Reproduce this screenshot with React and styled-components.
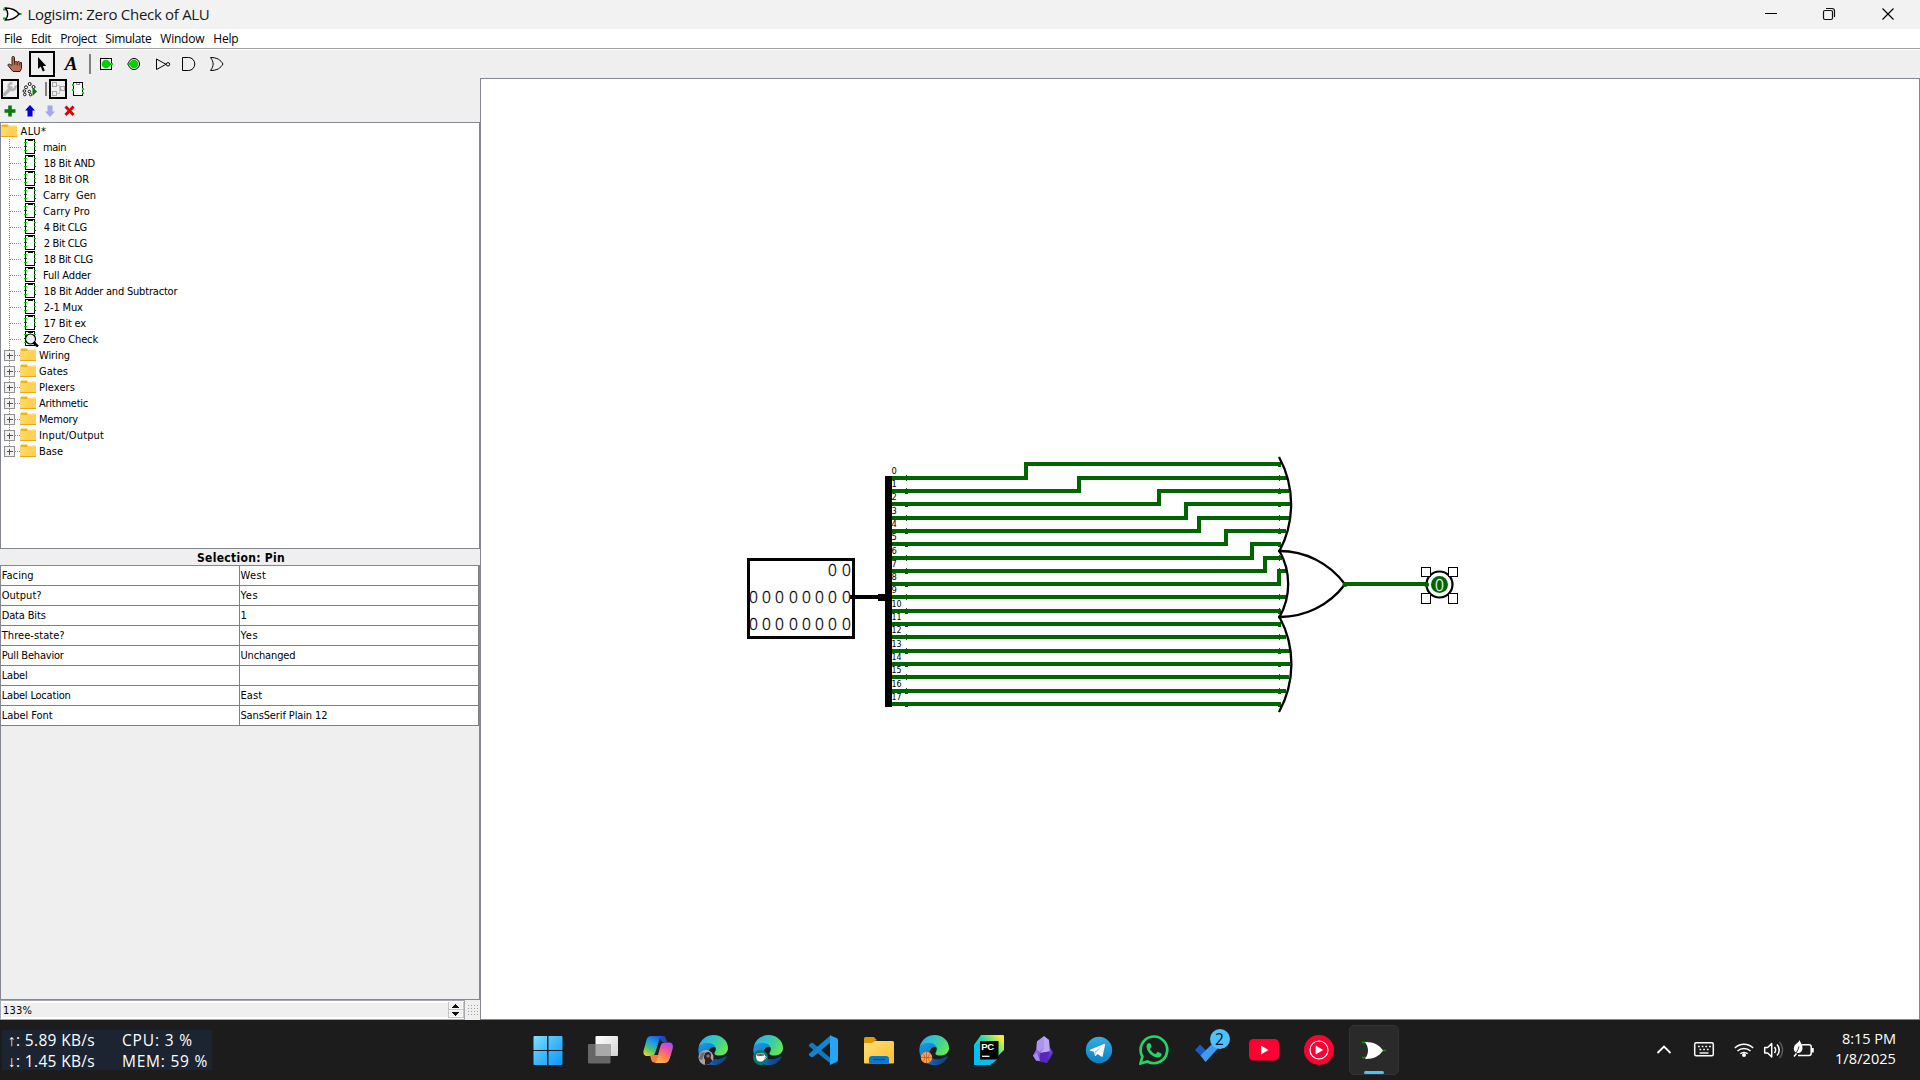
import React, { useLayoutEffect, useRef, useState } from "react";
import styled, { createGlobalStyle, css } from "styled-components";

const TAHOMA = '"DejaVu Sans Condensed", "DejaVu Sans", sans-serif';
const SEGOE = '"Open Sans", "Noto Sans", sans-serif';
const WIRE = "#006400";
const EDGE = "#828790";

const Global = createGlobalStyle`
  * { box-sizing: border-box; }
  body { margin: 0; background: #efefef; overflow: hidden; }
  svg { display: block; flex: none; }
`;

const Screen = styled.div`
  width: 1920px;
  height: 1080px;
  display: flex;
  flex-direction: column;
  background: #efefef;
  color: #000;
  font: 11px ${TAHOMA};
`;

/* ---------- text run fitted to a given advance width ---------- */
const Run = styled.span`
  white-space: pre;
  display: inline-block;
  flex: none;
`;
function Fit({ w, children }) {
  const ref = useRef(null);
  const [spacing, setSpacing] = useState(0);
  useLayoutEffect(() => {
    const natural = ref.current.getBoundingClientRect().width;
    setSpacing((w - natural) / children.length);
  }, [w, children]);
  return <Run ref={ref} style={{ letterSpacing: spacing }}>{children}</Run>;
}

/* ---------- title and menu ---------- */
const TitleBar = styled.header`
  height: 29px;
  flex: none;
  display: flex;
  align-items: flex-start;
  background: #f2f2f2;
  padding-left: 3px;
  font: 15px/28px ${SEGOE};
  color: #191919;
`;
const TitleText = styled.div`
  margin-left: 5.5px;
  flex: 1;
`;
const WindowButton = styled.div`
  width: ${(p) => p.$w || 58}px;
  height: 29px;
  display: flex;
  justify-content: center;
`;
const WindowButtons = styled.div`
  display: flex;
  padding-right: 2px;
`;
const MenuBar = styled.nav`
  height: 21px;
  flex: none;
  display: flex;
  gap: 9px;
  padding-left: 4px;
  background: linear-gradient(#fff 0 19px, #a0a0a0 19px 20px, #fff 20px);
  font: 12px/19px ${SEGOE};
`;

/* ---------- toolbars ---------- */
const ToolRow = styled.div`
  height: ${(p) => p.$h}px;
  flex: none;
  display: flex;
  align-items: flex-start;
  padding-left: ${(p) => p.$pad}px;
`;
const Tool = styled.div`
  flex: none;
  width: ${(p) => p.$w}px;
  height: ${(p) => p.$h}px;
  margin: ${(p) => p.$m || "0"};
  ${(p) => p.$active && css`box-shadow: inset 0 0 0 2px #000;`}
`;
const Divider = styled.div`
  width: 2px;
  height: ${(p) => p.$h}px;
  margin: ${(p) => p.$m};
  background: #808080;
`;
const LetterTool = styled(Tool)`
  font: italic bold 19px/28px "Liberation Serif", serif;
  text-align: center;
`;

/* ---------- main area ---------- */
const Main = styled.div`
  flex: none;
  height: 942px;
  display: flex;
`;
const Side = styled.aside`
  width: 480px;
  display: flex;
  flex-direction: column;
`;
const Canvas = styled.section`
  flex: 1;
  border: 1px solid ${EDGE};
  background: #fff;
`;
const Tree = styled.div`
  height: 427px;
  flex: none;
  border: 1px solid ${EDGE};
  background: #fff;
`;
const TreeRow = styled.div`
  height: 16px;
  display: flex;
  align-items: flex-start;
  line-height: 18px;
`;
const TreeLabel = styled.div`
  margin-left: ${(p) => p.$gap}px;
`;
const Heading = styled.div`
  height: 16px;
  flex: none;
  padding-left: 2px;
  text-align: center;
  font: bold 12px/18px ${TAHOMA};
`;
const Properties = styled.div`
  flex: 1;
  border: 1px solid ${EDGE};
`;
const PropRow = styled.div`
  height: 20px;
  width: 478px;
  display: grid;
  grid-template-columns: 239px 239px;
  grid-template-rows: 20px;
  line-height: 20px;
`;
const Cell = styled.div`
  background: #fff;
  border-right: 1px solid #808080;
  border-bottom: 1px solid #808080;
  padding-left: ${(p) => (p.$value ? 0.4 : 0.7)}px;
`;
const ZoomRow = styled.div`
  height: 20px;
  flex: none;
  display: flex;
`;
const Spinner = styled.div`
  width: 465px;
  display: flex;
  border: 1px solid #a5a9b0;
  background: #efefef;
  box-shadow: inset 0 0 0 2px #fff;
  padding-left: 2px;
  line-height: 20px;
`;
const SpinnerValue = styled.div`
  flex: 1;
`;

/* ---------- taskbar ---------- */
const Taskbar = styled.footer`
  height: 60px;
  flex: none;
  display: flex;
  background: #1c1c1c;
  color: #fff;
  font: 15.5px/21px ${SEGOE};
`;
const Meter = styled.div`
  width: 210px;
  height: 40px;
  margin: 10px 308.4px 0 2px;
  padding: 0 0 0 6px;
  background: #1b2430;
  display: grid;
  grid-template-columns: 114px 1fr;
  grid-auto-rows: 21px;
  justify-items: start;
  line-height: 20px;
`;
const Apps = styled.div`
  display: flex;
  align-items: center;
`;
const AppSlot = styled.div`
  position: relative;
  width: 55.1px;
  height: 50px;
  display: flex;
  align-items: center;
  justify-content: center;
`;
const ActiveTile = styled.div`
  width: 50px;
  height: 50px;
  border-radius: 5px;
  border: 1px solid #333;
  background: #2a2a2a;
  display: flex;
  flex-direction: column;
  align-items: center;
  justify-content: flex-end;
`;
const ActiveMark = styled.div`
  width: 20px;
  height: 4px;
  border-radius: 2px;
  background: #4cc2ff;
`;
const Badge = styled.div`
  position: absolute;
  left: 28px;
  top: 4px;
  width: 20px;
  height: 20px;
  border-radius: 50%;
  background: #4cc2ff;
  color: #111;
  font: 15.5px/20px ${SEGOE};
  text-align: center;
`;
const Tray = styled.div`
  margin-left: auto;
  display: flex;
`;
const Clock = styled.div`
  width: 71px;
  margin-right: 24px;
  padding-top: 9px;
  display: flex;
  flex-direction: column;
  align-items: flex-end;
  font: 14.5px/20px ${SEGOE};
`;

/* Icon whose drawing uses the window's pixel grid: (x, y) is its corner. */
function Glyph({ x, y, w, h, children, smooth }) {
  return (
    <svg width={w} height={h} viewBox={`${x} ${y} ${w} ${h}`} fill="none" shapeRendering={smooth ? "auto" : "crispEdges"}>
      {children}
    </svg>
  );
}

function MainToolbar() {
  return (
    <ToolRow $h={28} $pad={1}>
      <Tool $w={28} $h={28}>
        <Glyph x={1} y={50} w={28} h={28} smooth>
          <path d="M12 57.500c0-1.500 2.300-1.500 2.500 0v5l1-1 2 .5 1.500-.5 1 1 1.500 0v6l-1.500 3h-7l-5-6c-.5-1 1-2 2.300-1l1.700 1z" fill="#b87055" stroke="#3c1a10" />
          <path d="M14.700 62v3M17.200 62.500v3M19.700 63v2.500" stroke="#3c1a10" strokeWidth=".8" />
        </Glyph>
      </Tool>
      <Tool $w={26} $h={26} $active $m="1px 2px 0 0">
        <Glyph x={29} y={51} w={26} h={26} smooth>
          <path d="M38 57v12l2.700-2.500 2.100 5 2-1-2-4.500h3.500z" fill="#000" />
        </Glyph>
      </Tool>
      <LetterTool $w={28} $h={28}>A</LetterTool>
      <Divider $h={20} $m="4px 1px 0 4px" />
      <Tool $w={28} $h={28}>
        <Glyph x={92} y={50} w={28} h={28} smooth>
          <rect x="100.500" y="58.500" width="11" height="11" stroke="#000" />
          <circle cx="106" cy="64" r="4.300" fill="#00d200" />
          <path d="M109 64h4" stroke="#00d200" strokeWidth="2" />
        </Glyph>
      </Tool>
      <Tool $w={28} $h={28}>
        <Glyph x={120} y={50} w={28} h={28} smooth>
          <circle cx="134" cy="64" r="5.500" stroke="#000" />
          <circle cx="134" cy="64" r="4.200" fill="#00d200" />
          <path d="M127 64h4" stroke="#00d200" strokeWidth="2" />
        </Glyph>
      </Tool>
      <Tool $w={28} $h={28}>
        <Glyph x={148} y={50} w={28} h={28} smooth>
          <path d="M156.500 59v10.500L166 64.300z" stroke="#000" />
          <circle cx="168" cy="64.300" r="1.700" stroke="#000" />
        </Glyph>
      </Tool>
      <Tool $w={28} $h={28}>
        <Glyph x={176} y={50} w={28} h={28} smooth>
          <path d="M182.500 57.500h6a6.300 6.500 0 0 1 0 13h-6z" stroke="#000" />
        </Glyph>
      </Tool>
      <Tool $w={28} $h={28}>
        <Glyph x={204} y={50} w={28} h={28} smooth>
          <path d="M210.500 57.500c7 0 10 2.500 12.500 6.500-2.500 4-5.500 6.500-12.500 6.500 3.500-4.500 3.500-8.500 0-13z" stroke="#000" />
        </Glyph>
      </Tool>
    </ToolRow>
  );
}

function ExplorerToolbar() {
  return (
    <ToolRow $h={22} $pad={1}>
      <Tool $w={18} $h={20} $active $m="1px 3px 0 0">
        <Glyph x={1} y={79} w={18} h={20} smooth>
          <path d="M4.500 94.500 11 88" stroke="#b4b4b4" strokeWidth="3.600" strokeLinecap="round" />
          <path d="M15.500 85.500a3.500 3.500 0 1 1-3-2.500" stroke="#b4b4b4" strokeWidth="2.600" />
        </Glyph>
      </Tool>
      <Tool $w={18} $h={20} $m="1px 5px 0 0">
        <Glyph x={22} y={79} w={18} h={20} smooth>
          <g fill="#fff" stroke="#000" strokeWidth=".9">
            <circle cx="29.700" cy="84" r="1.500" /><circle cx="26" cy="87.300" r="1.500" /><circle cx="33.500" cy="87" r="1.500" />
            <circle cx="24.300" cy="91" r="1.300" /><circle cx="24.800" cy="94.500" r="1.300" /><circle cx="29.300" cy="91.500" r="1.300" /><circle cx="30.500" cy="94.700" r="1.200" />
          </g>
          <path d="m32.500 87 4.500 4.500-4.500 4.500z" fill="#0a7a0a" />
        </Glyph>
      </Tool>
      <Divider $h={14} $m="4px 2px 0 0" />
      <Tool $w={18} $h={20} $active $m="1px 4px 0 0">
        <Glyph x={49} y={79} w={18} h={20}>
          <path d="M57 85.500h2.500v5M57 93.500h2.500v-4h2" stroke="#a8dca8" />
          <path d="M52.500 82.500h4v4h-4zM52.500 91.500h4v4h-4zM60.500 86.500h4v4h-4z" stroke="#a8a8a8" />
        </Glyph>
      </Tool>
      <Tool $w={14} $h={20} $m="1px 0 0 0">
        <Glyph x={71} y={79} w={14} h={20}>
          <path d="M73.500 82.500h9v13h-9z" fill="#fff" stroke="#000" />
          <path d="M76.500 83v1.500h3V83" stroke="#999" />
          <path d="M72 85h2M72 90h2M82 89h2M82 93h2" stroke="#00d200" strokeWidth="2" />
        </Glyph>
      </Tool>
    </ToolRow>
  );
}

function EditToolbar() {
  return (
    <ToolRow $h={22} $pad={0}>
      <Glyph x={0} y={100} w={20} h={22} smooth>
        <path d="M10 105.500v11M4.500 111h11" stroke="#0a7a0a" strokeWidth="3.600" />
      </Glyph>
      <Glyph x={20} y={100} w={20} h={22} smooth>
        <path d="m30 105 5 5.500h-2.500v6h-5v-6H25z" fill="#0000dc" />
      </Glyph>
      <Glyph x={40} y={100} w={20} h={22} smooth>
        <path d="m50 117-5-5.500h2.500v-6h5v6H55z" fill="#a6a6ec" />
      </Glyph>
      <Glyph x={60} y={100} w={20} h={22} smooth>
        <path d="m65.500 106.500 8 8.500m0-8.500-8 8.500" stroke="#e00000" strokeWidth="2.900" />
      </Glyph>
    </ToolRow>
  );
}

/* ---------- explorer tree ---------- */
const circuits = [
  ["main", 23], ["18 Bit AND", 51], ["18 Bit OR", 45], ["Carry  Gen", 53], ["Carry Pro", 47], ["4 Bit CLG", 43],
  ["2 Bit CLG", 43], ["18 Bit CLG", 49], ["Full Adder", 48], ["18 Bit Adder and Subtractor", 133.5], ["2-1 Mux", 39],
  ["17 Bit ex", 42], ["Zero Check", 55],
];
const libraries = [
  ["Wiring", 31], ["Gates", 29], ["Plexers", 36], ["Arithmetic", 49], ["Memory", 39], ["Input/Output", 65], ["Base", 24],
];

function Folder() {
  return (
    <svg width="16" height="16" viewBox="0 0 16 16">
      <path d="M1 1.500h6l1 2v4H.5v-5z" fill="#f4b014" />
      <path d="M0 4h7l1.500-1.500H16V14H0z" fill="#ffd868" />
      <path d="M8 4h8v9H4z" fill="#ffcf4c" opacity=".7" />
      <path d="M0 13h16v1H0z" fill="#e5a823" />
    </svg>
  );
}
function CircuitIcon({ current }) {
  return (
    <svg width="42" height="16" viewBox="1 0 42 16" fill="none" shapeRendering="crispEdges">
      <path d="M9.500 0v16" stroke="#8a8a8a" strokeDasharray="1 1" />
      <path d="M10 8.500h11" stroke="#8a8a8a" strokeDasharray="1 1" />
      <path d="M25.500.5h9v14h-9zM28 .5v1h4v-1" stroke="#000" />
      <path d="M24 3.500h3M24 11.500h3M34 7.500h2M34 3.500h2" stroke="#00d200" />
      <path d="M24 7.500h3M34 11.500h2" stroke="#005a00" />
      {current && (
        <g shapeRendering="auto">
          <circle cx="30.500" cy="8" r="5" fill="#eeeeff" stroke="#000" strokeWidth="1.200" />
          <path d="m33.500 11.500 4.500 4" stroke="#000" strokeWidth="2.500" />
        </g>
      )}
    </svg>
  );
}
function Expander({ last }) {
  return (
    <svg width="19" height="16" viewBox="1 0 19 16" fill="none" shapeRendering="crispEdges">
      <path d={last ? "M9.500 0v8" : "M9.500 0v16"} stroke="#8a8a8a" strokeDasharray="1 1" />
      <path d="M15 8.500h5" stroke="#8a8a8a" strokeDasharray="1 1" />
      <rect x="4.500" y="3.500" width="10" height="10" fill="#f1f1f1" stroke="#919191" />
      <path d="M7 8.500h6M9.500 6v6" stroke="#3a509c" />
    </svg>
  );
}
function Explorer() {
  return (
    <Tree>
      <TreeRow>
        <Folder />
        <TreeLabel $gap={3.5}><Fit w={26}>ALU*</Fit></TreeLabel>
      </TreeRow>
      {circuits.map(([name, w]) => (
        <TreeRow key={name}>
          <CircuitIcon current={name === "Zero Check"} />
          <TreeLabel $gap={/^\d/.test(name) ? 0.8 : 0}><Fit w={w}>{name}</Fit></TreeLabel>
        </TreeRow>
      ))}
      {libraries.map(([name, w]) => (
        <TreeRow key={name}>
          <Expander last={name === "Base"} />
          <Folder />
          <TreeLabel $gap={3}><Fit w={w}>{name}</Fit></TreeLabel>
        </TreeRow>
      ))}
    </Tree>
  );
}

const properties = [
  ["Facing", 32, "West", 26], ["Output?", 40, "Yes", 18], ["Data Bits", 44, "1", 7], ["Three-state?", 63, "Yes", 18],
  ["Pull Behavior", 62, "Unchanged", 55], ["Label", 26, "", 0], ["Label Location", 69, "East", 22],
  ["Label Font", 51, "SansSerif Plain 12", 87],
];

/* ---------- circuit drawing ---------- */
const rows = [464, 478, 491, 504, 518, 531, 544, 558, 571, 584, 597, 611, 624, 637, 651, 664, 677, 691, 704];
const jogs = [1026, 1079, 1159, 1186, 1199, 1226, 1252, 1265, 1279];
const ends = [1281, 1287, 1289, 1290, 1289, 1286, 1281, 1282, 1286, 0, 1287, 1281, 1281, 1286, 1290, 1290, 1289, 1286, 1281];
const digitCols = [753, 766, 779, 793, 806, 819, 832, 846];

function bump(x, i, y) {
  const m = (i + 2) % 3;
  return (
    <g key={`${x}-${y}`} fill={WIRE}>
      {m !== 2 && <rect x={x} y={y - 3} width="1" height="6" />}
      {m !== 0 && <rect x={x - 1} y={y} width="3" height="3" />}
    </g>
  );
}

function Circuit() {
  return (
    <svg width="1438" height="939" viewBox="481 79 1438 939" fill="none" shapeRendering="crispEdges">
      <g stroke={WIRE} strokeWidth="4">
        {rows.slice(1).map((y, i) =>
          i < 9 ? (
            <path key={y} d={`M892 ${y}H${jogs[i]}V${rows[i]}H${ends[i]}`} />
          ) : (
            <path key={y} d={`M892 ${y}H${ends[i + 1]}`} />
          )
        )}
        <path d="M1344 584h83" />
      </g>
      {rows.slice(1).map((y, i) => bump(906, i + 1, y))}
      {rows.filter((y) => y !== 584).map((y, i) => bump(1279, i < 9 ? i : i + 1, y))}
      <rect x="885" y="476" width="7" height="231" fill="#000" />
      <path d="M850 597h30" stroke="#000" strokeWidth="4" />
      <rect x="878" y="594" width="8" height="7" fill="#000" />
      <rect x="748.500" y="559.500" width="105" height="78" stroke="#000" strokeWidth="3" />
      <g fill="#000" fontFamily={TAHOMA} fontSize="9.300">
        {rows.slice(1).map((y, i) => (
          <text key={y} x="891.600" y={y - 3.8} textLength={i > 9 ? 10 : undefined} lengthAdjust="spacingAndGlyphs">{i}</text>
        ))}
      </g>
      <g fill="#000" stroke="#000" strokeWidth=".35" fontFamily={SEGOE} fontWeight="300" fontSize="15.500" textAnchor="middle">
        {[576, 603, 630].map((y, r) =>
          digitCols.filter((_, c) => r > 0 || c > 5).map((x) => (
            <text key={`${x}-${y}`} x={x + 0.5} y={y}>0</text>
          ))
        )}
      </g>
      <g stroke="#000" strokeWidth="2.300" shapeRendering="auto">
        <path d="M1279 457A99 99 0 0 1 1279.500 551A67 67 0 0 1 1279.500 617A99 99 0 0 1 1279 712" />
        <path d="M1278 551A81 81 0 0 1 1345 584.300A81 81 0 0 1 1278 617" />
        <circle cx="1345" cy="584.500" r="2.500" fill={WIRE} stroke="none" />
        <circle cx="1439.500" cy="584.500" r="13" strokeWidth="2.200" />
        <circle cx="1439.500" cy="584.500" r="8.500" fill={WIRE} stroke="none" />
        <circle cx="1426.500" cy="584.500" r="2.500" fill={WIRE} stroke="none" />
      </g>
      <text x="1439.500" y="590.500" fill="#fff" stroke="#fff" strokeWidth=".3" fontFamily={SEGOE} fontWeight="300" fontSize="15.500" textAnchor="middle">0</text>
      <g fill="#fff" stroke="#000">
        {[[1421, 567], [1448, 567], [1421, 593], [1448, 593]].map(([x, y]) => (
          <rect key={`${x}${y}`} x={x + 0.5} y={y + 0.5} width="9" height={y === 567 ? 9 : 10} />
        ))}
      </g>
    </svg>
  );
}

/* ---------- taskbar drawings ---------- */
function Gradients() {
  const g = (id, stops, dir = [0, 0, 1, 1]) => (
    <linearGradient id={id} x1={dir[0]} y1={dir[1]} x2={dir[2]} y2={dir[3]}>
      {stops.map((c, i) => <stop key={i} offset={i / (stops.length - 1)} stopColor={c} />)}
    </linearGradient>
  );
  return (
    <svg width="0" height="0">
      <defs>
        {g("win", ["#7ee0ff", "#3fb8fb", "#0a96ff"])}
        {g("edgeTop", ["#2fa9ea", "#2dc3d5", "#46d38a", "#6bea4e"], [0, 0.2, 1, 0.7])}
        {g("edgeMid", ["#1ca0e8", "#0c62b8"], [0, 0, 0.6, 1])}
        {g("edgeLow", ["#1470c8", "#123e80"], [0, 0, 1, 0.6])}
        {g("copA", ["#1a5fe0", "#1c9de8", "#4cc36f", "#e8d62a"], [0.7, 0, 0.2, 1])}
        {g("copB", ["#a44ff0", "#f0569f", "#ff8a4a", "#ffc24a"], [0.7, 0, 0.2, 1])}
        {g("folder", ["#ffe07a", "#ffbd2a"], [0, 0, 1, 1])}
        {g("pc", ["#00c8f0", "#17d5b5", "#f5f02a"], [0.1, 0.8, 0.9, 0.1])}
        {g("obs", ["#c4aaff", "#8a5be8", "#4d23b0"], [0.2, 0, 0.7, 1])}
        {g("tg", ["#35ade0", "#0d7fc4"], [0, 0, 0, 1])}
        {g("task", ["#fff", "#d4d4d4"])}
      </defs>
    </svg>
  );
}
const Svg30 = ({ children }) => <svg width="30" height="30" viewBox="0 0 30 30" fill="none">{children}</svg>;

/* Browser swirl: upper wave, left body, dark lower crescent. */
function Edge({ children }) {
  return (
    <Svg30>
      <path d="M.3 14C2 8.500 7 7.500 11 7.500c4 0 7 2 7.500 5-5-2-8.500 2-8 7 .5 5 5 8.500 9.500 9.500-2 .8-4 1-5 1C6 30 0 23 .3 14z" fill="url(#edgeMid)" />
      <path d="M.5 13C2 4 9 0 15.500 0 24 0 30 6 30 13c0 5-4 7.500-9 7.500-4 0-5.500-1.500-4-3.500 2.500-4-.5-9-7-9C5 8 2 10 .5 13z" fill="url(#edgeTop)" />
      <path d="M10.500 17c-1 7 7 10 17 4.500 1-.5 1.500 0 1 1C26 27 22 29.500 18.500 30 12 29 8 22 10.500 17z" fill="url(#edgeLow)" />
      {children}
    </Svg30>
  );
}

function TaskbarApps() {
  return (
    <Apps>
      <AppSlot>
        <Svg30><path d="M.5 2q0-1 1-1H14v14H.500zM15.500 1H28.500q1 0 1 1v13h-14zM.5 16H14v14H1.500q-1 0-1-1zM15.500 16h14v13q0 1-1 1h-13z" fill="url(#win)" /></Svg30>
      </AppSlot>
      <AppSlot>
        <Svg30>
          <rect x="7.500" y="1" width="22.500" height="20" rx="1" fill="url(#task)" />
          <rect x="0" y="9" width="22.500" height="19.500" rx="1" fill="#666" />
          <path d="M7.500 9h15v12h-15z" fill="#a9a9a9" />
        </Svg30>
      </AppSlot>
      <AppSlot>
        <Svg30>
          <path d="M15 1h5c2 0 2.500 1.500 3 3l1 3h-5z" fill="#1c48d0" />
          <path d="M8 1h11c-1 0-2 1-2.500 3l-4 13c-.8 2.500-2 4-4.500 4H4C1 21 0 18.500.6 15.500L3.500 5C4.300 2 6 1 8 1z" fill="url(#copA)" />
          <path d="M7 20h8l-1 7.500h-3c-2 0-2.500-1.500-3-3.500z" fill="#ff7a3c" />
          <path d="M22 7.500h4.500c3 0 4 3 3.200 6l-3 10c-.8 3-2.700 4.500-5.200 4.500H11c1.500 0 2-1 2.500-2.500l4-14.500c.7-2.500 2-3.500 4.500-3.500z" fill="url(#copB)" />
        </Svg30>
      </AppSlot>
      <AppSlot>
        <Edge>
          <circle cx="8" cy="22.500" r="7.500" fill="#a9a3a8" />
          <path d="M7 30v-5l-1-2c0-3 1-6 4-6s3.500 3 2.500 6l2 3c-2 3-5 4-7.500 4z" fill="#2a2222" />
          <path d="M3 18l4-1-3 8-3-1z" fill="#6e6a78" />
          <circle cx="10" cy="21" r="1.700" fill="#9a6d5a" />
        </Edge>
      </AppSlot>
      <AppSlot>
        <Edge>
          <circle cx="7.500" cy="22.500" r="7.500" fill="#08776a" />
          <path d="M3 20h9c0 5-1.500 6.500-4.500 6.500S3 25 3 20z" fill="#fff" />
          <ellipse cx="7.500" cy="20" rx="4.200" ry="1.300" fill="#5a3524" stroke="#fff" strokeWidth=".7" />
          <path d="M12 21.500c2-.5 1.500 2.500-.7 2.500" stroke="#fff" strokeWidth=".8" />
        </Edge>
      </AppSlot>
      <AppSlot>
        <Svg30>
          <path d="M1.300 9.500 3 8q1-.7 2 0l18 15.500V29L1.300 11.500q-1-1 0-2z" fill="#1577bd" />
          <path d="M1.300 20.500 3 22q1 .7 2 0L23 7V0L1.300 18.500q-1 1 0 2z" fill="#0f86d3" />
          <path d="M22 .3 28.500 3Q30 3.700 30 5v20q0 1.300-1.500 2L22 30c-.5-.5 0-1 0-2z" fill="#27a5f3" />
        </Svg30>
      </AppSlot>
      <AppSlot>
        <Svg30>
          <path d="M0 3.500Q0 2 1.500 2H9q1 0 2 1l2 2.500h-2L8 9H0z" fill="#dc9a08" />
          <path d="M0 8h7.500q1 0 2-1l1-1H28.500Q30 6 30 7.500v20q0 1-1 1H1q-1 0-1-1z" fill="url(#folder)" />
          <path d="M5 28.500V24q0-3 3-3h14q3 0 3 3v4.500z" fill="#0c78cc" />
          <path d="M9 24.500h12" stroke="#064a8a" strokeWidth="1.300" />
        </Svg30>
      </AppSlot>
      <AppSlot>
        <Edge>
          <circle cx="7.500" cy="22.500" r="5.700" fill="#ff9d48" />
          <path d="M2 22.500h11M7.500 17v11M3.500 18.500c3 2 3 6 0 8M11.500 18.500c-3 2-3 6 0 8" stroke="#9d5420" strokeWidth=".6" />
        </Edge>
      </AppSlot>
      <AppSlot>
        <Svg30>
          <path d="M7 0h22q1 0 1 1v14L15 30H1q-1 0-1-1V10z" fill="url(#pc)" />
          <path d="M0 13 6 6v18h18l-8 6H1q-1 0-1-1z" fill="#00c0f0" />
          <rect x="6" y="6" width="18.500" height="18.500" fill="#000" />
          <text x="7.200" y="14.800" fill="#fff" fontFamily='"Liberation Sans", sans-serif' fontWeight="bold" fontSize="9.500" textLength="13">PC</text>
          <path d="M8 21.300h7.500" stroke="#fff" strokeWidth="1.300" />
        </Svg30>
      </AppSlot>
      <AppSlot>
        <Svg30>
          <path d="M15 1.300 8 6.500 7.500 14 4 20.500l3 5L18 28l3.500-5L24 17.500 20.500 12 20 5z" fill="url(#obs)" />
          <path d="M15 1.300 8 6.500 7.500 14l3 3L15 13z" fill="#a995ee" />
          <path d="M15 1.300 15 13l-4 5 9.500-1.500L20.500 12 20 5z" fill="#bda6f5" />
          <path d="m4 20.500 4-3 3 8.500-4-.5z" fill="#a78af0" />
          <path d="M11 18l9.500-1.500-2.500 11.500-7-2z" fill="#5728b8" />
        </Svg30>
      </AppSlot>
      <AppSlot>
        <Svg30>
          <circle cx="15" cy="15" r="13.200" fill="url(#tg)" />
          <path d="M6 14.800 20 9q1.300-.4 1 1l-2.300 11q-.3 1.300-1.500.6l-3.600-2.700-2 2q-.5.400-.7-.5l-1-3.700-3.700-1q-1-.4-.2-.9z" fill="#fff" />
          <path d="m10.500 16.500 7.500-5-6 6-.5 3z" fill="#a9cfe8" />
        </Svg30>
      </AppSlot>
      <AppSlot>
        <Svg30>
          <path d="M1.500 28.500 3.400 21.500A13.300 13.300 0 1 1 8.500 26.500z" stroke="#25d366" strokeWidth="2.700" />
          <path d="M10.500 8c-2 0-3 1.700-3 3.500C8 17.500 14 22.700 19 22.500c2 0 3.700-1.500 3.700-3.300 0-.7-3.300-2.200-4-2.200s-1.500 2-2.200 2c-1.500 0-5-3.200-5.500-5 0-.7 1.500-1.500 1.500-2.300 0-.7-1.200-3.700-2-3.700z" fill="#25d366" />
        </Svg30>
      </AppSlot>
      <AppSlot>
        <Svg30>
          <path d="m1 15 5-5.500 7 7L8 22z" fill="#185abd" />
          <path d="M6.500 20.500 23 4l5 5-16.500 18z" fill="#3f9cf0" />
        </Svg30>
        <Badge>2</Badge>
      </AppSlot>
      <AppSlot>
        <Svg30>
          <rect y="4" width="30" height="21.500" rx="4.500" fill="#ff0033" />
          <path d="M12 10.500v9l7.500-4.500z" fill="#fff" />
        </Svg30>
      </AppSlot>
      <AppSlot>
        <Svg30>
          <circle cx="15" cy="15" r="15" fill="#ff0033" />
          <circle cx="15" cy="15" r="9" stroke="#fff" strokeWidth="1.200" />
          <path d="M11.700 10.500v9l7.500-4.500z" fill="#fff" />
        </Svg30>
      </AppSlot>
      <AppSlot>
        <ActiveTile>
          <svg width="26" height="45" viewBox="0 0 26 45">
            <path d="M1 16.500h6M1 31.500h6M20 24.500h5" stroke="#009a00" strokeWidth="1.500" />
            <path d="M4 16c10 0 14 3 18 8.500C18 30 14 33 4 33c4-6 4-11 0-17z" fill="#fff" />
          </svg>
          <ActiveMark />
        </ActiveTile>
      </AppSlot>
    </Apps>
  );
}

function TrayIcons() {
  return (
    <Glyph x={1650} y={1020} w={175} h={60} smooth>
      <g stroke="#fff" strokeWidth="1.500">
        <path d="m1657.500 1053 6.500-6.500 6.500 6.500" strokeWidth="1.800" />
        <rect x="1694.700" y="1042.700" width="18.600" height="13" rx="1.500" />
        <path d="M1698 1046.500h13M1699.500 1049.500h11" strokeWidth="1.600" strokeDasharray="1.700 2" />
        <path d="M1699.500 1053h9" strokeWidth="1.400" />
        <path d="M1734.800 1048a13.200 13.200 0 0 1 18.400 0M1737.500 1051a9.400 9.400 0 0 1 13 0M1740.300 1053.800a5.600 5.600 0 0 1 7.400 0" />
        <circle cx="1744" cy="1055" r="2" fill="#fff" stroke="none" />
        <path d="M1764.700 1047.500h3l4-4v13.500l-4-4h-3z" strokeLinejoin="round" />
        <path d="M1774.500 1047a5 5 0 0 1 0 6M1777 1044.500a8 8 0 0 1 0 11" />
        <path d="M1779.500 1042a12 12 0 0 1 0 16" stroke="#555" />
        <path d="M1802 1044.700h7q2.200 0 2.200 2.200v6.400q0 2.200-2.200 2.200h-11" />
        <path d="M1812.500 1048v4.500" strokeWidth="2.500" />
        <path d="M1799.500 1040c1 3 3 4 3 8 0 4-3 5.500-5.500 5-3.500-1-4-5-2-8 1.500-2 4-2.500 4.500-5z" fill="#fff" stroke="none" />
        <path d="M1799 1046.500c-1 4-3 6.500-5 9" stroke="#1c1c1c" strokeWidth=".9" />
        <path d="m1794 1056.500 2.500-3" />
      </g>
    </Glyph>
  );
}

export default function App() {
  return (
    <Screen>
      <Global />
      <TitleBar>
        <Glyph x={3} y={0} w={19} h={29} smooth>
          <path d="M3 9.500h3M3 18.500h3M18 14h3.500" stroke="#00b400" strokeWidth="2" />
          <path d="M5.500 8c7 0 10.500 2 13.500 6-3 4-6.500 6-13.500 6 3-4 3-8 0-12z" fill="#fff" stroke="#000" strokeWidth="1.300" />
        </Glyph>
        <TitleText><Fit w={182}>Logisim: Zero Check of ALU</Fit></TitleText>
        <WindowButtons>
          <WindowButton><svg width="14" height="29" fill="none"><path d="M1 13.500h12" stroke="#000" /></svg></WindowButton>
          <WindowButton>
            <svg width="14" height="29" fill="none" stroke="#111" strokeWidth="1.200">
              <rect x="1.500" y="10.500" width="9" height="9" rx="1.500" />
              <path d="M4 8.500h6q2.500 0 2.500 2.500v6" />
            </svg>
          </WindowButton>
          <WindowButton $w={60}><svg width="14" height="29" fill="none"><path d="m1.500 8.500 11 11m0-11-11 11" stroke="#000" strokeWidth="1.200" /></svg></WindowButton>
        </WindowButtons>
      </TitleBar>
      <MenuBar>
        <Fit w={18}>File</Fit>
        <Fit w={20.3}>Edit</Fit>
        <Fit w={36}>Project</Fit>
        <Fit w={46}>Simulate</Fit>
        <Fit w={44}>Window</Fit>
        <Fit w={25}>Help</Fit>
      </MenuBar>
      <MainToolbar />
      <Main>
        <Side>
          <ExplorerToolbar />
          <EditToolbar />
          <Explorer />
          <Heading><Fit w={88}>Selection: Pin</Fit></Heading>
          <Properties>
            {properties.map(([name, w, value, vw]) => (
              <PropRow key={name}>
                <Cell><Fit w={w}>{name}</Fit></Cell>
                <Cell $value>{value && <Fit w={vw}>{value}</Fit>}</Cell>
              </PropRow>
            ))}
          </Properties>
          <ZoomRow>
            <Spinner>
              <SpinnerValue><Fit w={29}>133%</Fit></SpinnerValue>
              <Glyph x={448} y={1001} w={16} h={18}>
                <rect x="448" y="1001" width="16" height="18" fill="#fff" />
                <path d="M448.500 1002v16M463.500 1002v16M449 1009.500h14M449 1017.500h14" stroke="#c4c4c4" />
                <path d="M450 1011h12v5h-12zM450 1003h12v5h-12z" fill="#f0f0f0" />
                <path d="m452 1008 3.500-4 3.500 4zM452 1012l3.500 4 3.500-4z" fill="#111" />
              </Glyph>
            </Spinner>
            <Glyph x={465} y={1000} w={15} h={20}>
              <path d="M467.500 1005.500h11M467.500 1008.500h11M467.500 1011.500h11M467.500 1014.500h11" stroke="#a0a0a0" strokeDasharray="1 2" />
            </Glyph>
          </ZoomRow>
        </Side>
        <Canvas><Circuit /></Canvas>
      </Main>
      <Taskbar>
        <Meter>
          <Fit w={87}>↑: 5.89 KB/s</Fit>
          <Fit w={71}>CPU: 3 %</Fit>
          <Fit w={87}>↓: 1.45 KB/s</Fit>
          <Fit w={86}>MEM: 59 %</Fit>
        </Meter>
        <TaskbarApps />
        <Tray>
          <TrayIcons />
          <Clock>
            <Fit w={54}>8:15 PM</Fit>
            <Fit w={61}>1/8/2025</Fit>
          </Clock>
        </Tray>
      </Taskbar>
      <Gradients />
    </Screen>
  );
}
